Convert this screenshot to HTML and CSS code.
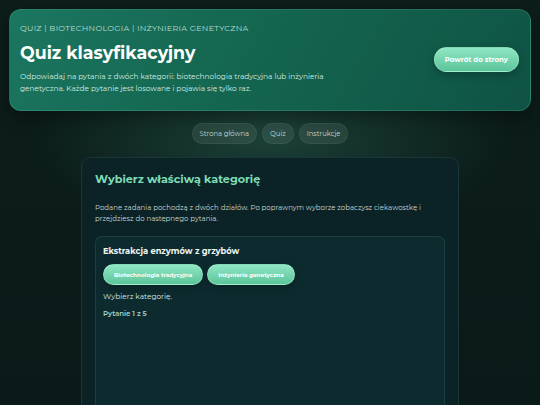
FILE: index.html
```html
<!DOCTYPE html>
<html lang="pl">
<head>
<meta charset="utf-8">
<title>Quiz klasyfikacyjny</title>
<link rel="stylesheet" href="styles.css">
</head>
<body>

<header class="hero">
  <div class="hero-text">
    <p class="crumbs">Quiz | Biotechnologia | Inżynieria genetyczna</p>
    <h1>Quiz klasyfikacyjny</h1>
    <p class="lead">Odpowiadaj na pytania z dwóch kategorii: biotechnologia tradycyjna lub inżynieria genetyczna. Każde pytanie jest losowane i pojawia się tylko raz.</p>
  </div>
  <a class="btn btn-back" href="#">Powrót do strony</a>
</header>

<nav class="nav">
  <a href="#">Strona główna</a>
  <a href="#">Quiz</a>
  <a href="#">Instrukcje</a>
</nav>

<main class="card">
  <h2>Wybierz właściwą kategorię</h2>
  <p class="intro">Podane zadania pochodzą z dwóch działów. Po poprawnym wyborze zobaczysz ciekawostkę i przejdziesz do następnego pytania.</p>

  <section class="question">
    <h3 id="question_text">Ekstrakcja enzymów z grzybów</h3>
    <div class="answers">
      <button class="btn" data-cat="trad">Biotechnologia tradycyjna</button>
      <button class="btn" data-cat="gen">Inżynieria genetyczna</button>
    </div>
    <p class="feedback">Wybierz kategorię.</p>
    <p class="counter">Pytanie 1 z 5</p>
  </section>
</main>

</body>
</html>
```

FILE: styles.css
```css
*
{
box-sizing: border-box;
}

html
{
height: 100%;
}

body
{
margin: 0;
padding: 9px 9px 0;
min-height: 100%;
font-family: "Montserrat", "Noto Sans", sans-serif;
color: #e6f2ee;
background-color: #0a1816;
background-image:
  radial-gradient(ellipse 240px 110px at 270px 135px, rgba(40, 95, 80, 0.55), rgba(40, 95, 80, 0) 100%),
  linear-gradient(180deg, #0c1d1a 0%, #0a1a18 100%);
background-repeat: no-repeat;
}

p
{
margin: 0;
}

/* header */

.hero
{
display: flex;
align-items: center;
justify-content: space-between;
padding: 13px 11px 15px 10px;
border-radius: 12px;
border: 1px solid rgba(120, 220, 180, 0.18);
background: linear-gradient(120deg, #1b7660 0%, #146650 45%, #0f5344 100%);
box-shadow: 0 6px 18px rgba(0, 0, 0, 0.35);
}

.hero-text
{
max-width: 306px;
}

.crumbs
{
font-size: 8px;
letter-spacing: 0.3px;
text-transform: uppercase;
color: #b9dccf;
}

.hero h1
{
margin: 9px 0 8px;
font-size: 17.4px;
font-weight: 700;
color: #ffffff;
}

.lead
{
font-size: 7.4px;
line-height: 12px;
color: #d4ebe3;
}

.btn
{
display: inline-block;
border: 1px solid rgba(200, 255, 230, 0.35);
border-radius: 999px;
background: linear-gradient(180deg, #8fe6c3 0%, #5cc49a 100%);
color: #ffffff;
font-family: inherit;
font-weight: 700;
text-decoration: none;
box-shadow: 0 3px 8px rgba(0, 0, 0, 0.25);
cursor: pointer;
}

.btn-back
{
padding: 7px 10px;
font-size: 7px;
}

/* nav pills */

.nav
{
display: flex;
justify-content: center;
gap: 5px;
margin-top: 12px;
}

.nav a
{
padding: 5px 7px;
border-radius: 999px;
border: 1px solid rgba(255, 255, 255, 0.06);
background: rgba(255, 255, 255, 0.08);
color: #c5d6d0;
font-size: 6.8px;
text-decoration: none;
}

/* main card */

.card
{
width: 378px;
min-height: 260px;
margin: 13px auto 0;
padding: 14px 13px 0;
border-radius: 9px 9px 0 0;
border: 1px solid rgba(120, 200, 180, 0.12);
border-bottom: none;
background: #0b2326;
}

.card h2
{
margin: 0 0 16px;
font-size: 11.2px;
font-weight: 700;
color: #7fdcb6;
}

.intro
{
font-size: 7px;
line-height: 11px;
color: #c8d6d2;
}

.question
{
min-height: 170px;
margin-top: 12px;
padding: 9px 7px;
border-radius: 7px 7px 0 0;
border: 1px solid rgba(120, 200, 180, 0.12);
border-bottom: none;
background: #0d2b2f;
}

.question h3
{
margin: 0 0 8px;
font-size: 8.3px;
font-weight: 700;
color: #eef6f3;
}

.answers
{
display: flex;
gap: 4px;
}

.answers .btn
{
padding: 6px 10px;
font-size: 5.7px;
}

.feedback
{
margin-top: 7px;
font-size: 7.4px;
color: #dbe8e4;
}

.counter
{
margin-top: 8px;
font-size: 7px;
font-weight: 600;
color: #a7d6c5;
}
```
